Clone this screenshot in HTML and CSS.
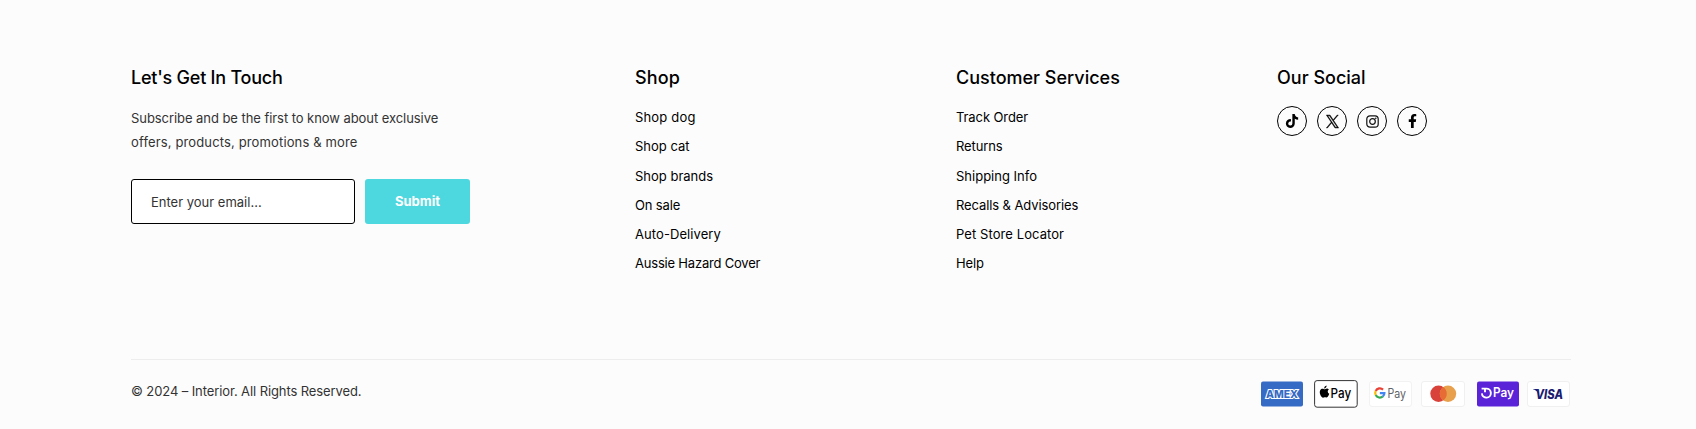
FILE: index.html
```
<!DOCTYPE html>
<html lang="en">
<head>
<meta charset="utf-8">
<title>Interior</title>
<link rel="stylesheet" href="styles.css">
</head>
<body>
<footer class="footer">
  <div class="columns">
    <section class="contact">
      <h2 class="title tight">Let's Get In Touch</h2>
      <p class="intro"><span class="intro-first">Subscribe and be the first to know about exclusive</span><br><span class="intro-second">offers, products, promotions &amp; more</span></p>
      <form class="signup">
        <input class="email" type="email" placeholder="Enter your email..." aria-label="Email">
        <button class="submit" type="button">Submit</button>
      </form>
    </section>
    <nav class="shop">
      <h2 class="title loose">Shop</h2>
      <ul class="links">
        <li class="wide">Shop dog</li>
        <li>Shop cat</li>
        <li>Shop brands</li>
        <li class="narrow">On sale</li>
        <li class="open">Auto-Delivery</li>
        <li class="narrower">Aussie Hazard Cover</li>
      </ul>
    </nav>
    <nav class="services">
      <h2 class="title">Customer Services</h2>
      <ul class="links">
        <li class="snug">Track Order</li>
        <li class="snug">Returns</li>
        <li>Shipping Info</li>
        <li class="snug">Recalls &amp; Advisories</li>
        <li class="open">Pet Store Locator</li>
        <li class="snug">Help</li>
      </ul>
    </nav>
    <section class="social">
      <h2 class="title">Our Social</h2>
      <div class="icons">
        <span class="icon"><svg width="14" height="14" viewBox="0 0 448 512"><path d="M448 209.900a210 210 0 0 1-122.800-39.300v178.800A162.600 162.600 0 1 1 185 188.300v89.900a74.600 74.600 0 1 0 52.200 71.200V0h88a121 121 0 0 0 1.900 22.200A122 122 0 0 0 381 102.400a121 121 0 0 0 67 20.100z"/></svg></span>
        <span class="icon"><svg class="cross" width="13" height="13" viewBox="0 0 24 24"><path d="M14.200 10.200 22.700 0h-2l-7.400 8.800L7.400 0H.6l8.900 13.200L.6 24h2l7.800-9.300 6.200 9.300h6.800zM3.300 1.600h3.100l14.300 20.900h-3.100z"/></svg></span>
        <span class="icon"><svg class="camera" width="13" height="13" viewBox="0 0 13 13"><rect x=".8" y=".8" width="11.400" height="11.400" rx="3.200"/><circle cx="6.500" cy="6.500" r="2.800"/><circle class="dot" cx="9.800" cy="3.200" r=".8"/></svg></span>
        <span class="icon"><svg width="9" height="14" viewBox="0 0 320 512"><path d="m279 288 14-93h-89v-60c0-25 12-50 52-50h41V7s-37-7-72-7c-73 0-121 44-121 125v70H23v93h81v224h100V288z"/></svg></span>
      </div>
    </section>
  </div>
  <div class="bottom">
    <p class="copyright">© 2024 – Interior. All Rights Reserved.</p>
    <div class="payments">
      <svg class="card amex" width="42" height="26" viewBox="0 0 42 26"><rect y=".5" width="42" height="25" rx="2" fill="#366bc5"/><text x="5" y="16.800" textLength="32" lengthAdjust="spacingAndGlyphs" font-size="10.500" font-weight="800" fill="#366bc5" stroke="#fff" stroke-width="2.200" paint-order="stroke">AMEX</text></svg>
      <svg class="card apple" width="44" height="28" viewBox="0 0 44 28"><rect x=".6" y=".6" width="42.600" height="26.600" rx="2.500" fill="#fff" stroke="#333"/><path transform="translate(-1.400 -1.600) scale(1.120)" d="M11.500 9.500c1.100-.8 2.300-.5 3 .3-1.500 1-1.200 3.200.4 3.900-.7 2.100-1.700 3.500-2.700 3.400-.8-.3-1.300-.4-2.200 0-2.200.9-4.500-4.200-3.200-6.500.9-1.500 2.300-1.600 3.400-1 .6.200.8.100 1.300-.1zM10.300 9c0-1.500.9-2.400 2.200-2.700.1 1.500-1 2.600-2.200 2.700z"/><text x="16.600" y="17.900" textLength="20.600" lengthAdjust="spacingAndGlyphs" font-size="13" font-weight="500">Pay</text></svg>
      <svg class="card google" width="44" height="28" viewBox="0 0 44 28"><rect x=".5" y="1.500" width="42" height="25" rx="2.500" fill="#fff" stroke="#f2f2f2"/><g fill="none" stroke-width="2" transform="translate(-1 -1.300) scale(1.100)"><path d="M7 11.200a4.200 4.200 0 0 1 6.700-1.300" stroke="#e94235"/><path d="M7 11.200a4.200 4.200 0 0 0 0 3.700" stroke="#fabb05"/><path d="M7 14.900a4.200 4.200 0 0 0 6.500 1.200" stroke="#34a853"/><path d="M13.500 16.100a4.200 4.200 0 0 0 1.400-3h-4.100" stroke="#4285f4"/></g><text x="18.500" y="17.700" textLength="18.500" lengthAdjust="spacingAndGlyphs" font-size="12.500" fill="#5f6368">Pay</text></svg>
      <svg class="card master" width="44" height="28" viewBox="0 0 44 28"><rect x=".5" y="1.500" width="43" height="25" rx="2.500" fill="#fff" stroke="#f0f0f0"/><circle cx="17.500" cy="13.800" r="8.200" fill="#d9423a"/><circle cx="27" cy="13.800" r="8.200" fill="#e9a04d"/><path d="M22.300 7.100a8.200 8.200 0 0 1 0 13.400 8.200 8.200 0 0 1 0-13.400z" fill="#e66b34"/></svg>
      <svg class="card opay" width="42" height="26" viewBox="0 0 42 26"><rect y=".5" width="42" height="25" rx="2" fill="#5a23d8"/><path d="M4.600 7.600H9.200a4.500 4.500 0 1 1-4.300 4.800M8 7.600v3.600" fill="none" stroke="#fff" stroke-width="1.900"/><text x="16" y="16.300" textLength="21" lengthAdjust="spacingAndGlyphs" font-size="12.500" font-weight="600" fill="#fff">Pay</text></svg>
      <svg class="card visa" width="44" height="28" viewBox="0 0 44 28"><rect x=".5" y="1.500" width="42" height="25" rx="2.500" fill="#fff" stroke="#f0f0f0"/><path d="M6 9.100h4l1.300 4.300C10 11 8.300 9.900 6 9.300z" fill="#1c1c72"/><text x="8.500" y="18.500" textLength="27.500" lengthAdjust="spacingAndGlyphs" font-size="12.500" font-weight="800" font-style="italic" fill="#1c1c72">VISA</text></svg>
    </div>
  </div>
</footer>
</body>
</html>
```
FILE: styles.css
```
* { box-sizing: border-box; }
body {
  margin: 0;
  background: #fcfcfc;
  color: #000;
  font: 13px/24px Inter, sans-serif;
}
.footer { height: 429px; padding: 65px 125px 0 131px; overflow: hidden; }
.columns {
  display: grid;
  grid-template-columns: 504px 321px 321px 1fr;
  height: 294px;
}
.title {
  margin: 0 0 16px;
  font-size: 18px;
  line-height: 25px;
  font-weight: 500;
}
.tight { letter-spacing: -.23px; }
.loose { letter-spacing: .14px; }
.intro { margin: 0 0 25px; color: #333; }
.intro-first { letter-spacing: -.06px; }
.intro-second { letter-spacing: .14px; }
.signup { display: flex; gap: 10px; margin: 0; }
.email {
  width: 224px;
  height: 45px;
  padding: 1px 20px 0 19px;
  border: 1px solid #000;
  border-radius: 3px;
  background: #fff;
  font: 13px Inter, sans-serif;
}
.email::placeholder { color: #333; opacity: 1; }
.submit {
  width: 105px;
  height: 45px;
  padding: 0 0 1px;
  border: 0;
  border-radius: 3px;
  background: #4dd8df;
  color: #fff;
  font: 700 13px Inter, sans-serif;
}
.links { margin: 0; padding: 0; list-style: none; line-height: 23.300px; }
.links li { margin-bottom: 6px; }
.wide { letter-spacing: .17px; }
.open { letter-spacing: .08px; }
.snug { letter-spacing: -.1px; }
.narrow { letter-spacing: -.15px; }
.narrower { letter-spacing: -.2px; }
.icons { display: flex; gap: 10px; }
.icon {
  display: flex;
  align-items: center;
  justify-content: center;
  width: 30px;
  height: 30px;
  border: 1px solid #000;
  border-radius: 50%;
}
.cross { stroke: #000; stroke-width: .8; overflow: visible; }
.camera { fill: none; stroke: #111; stroke-width: 1.200; margin-top: 1px; }
.camera .dot { fill: #111; stroke: none; }
.bottom {
  display: flex;
  justify-content: space-between;
  align-items: flex-start;
  width: 1440px;
  border-top: 1px solid #ededed;
}
.copyright { margin: 19px 0 0; color: #333; letter-spacing: -.1px; }
.payments {
  display: flex;
  align-items: center;
  gap: 10px;
  margin-top: 20px;
  font-family: Inter, sans-serif;
}
.amex { margin-right: 1px; }
.apple { margin-right: 1px; }
.google { margin-right: -2px; }
.master { margin-right: 2px; }
.opay { margin-right: -2px; }
```
